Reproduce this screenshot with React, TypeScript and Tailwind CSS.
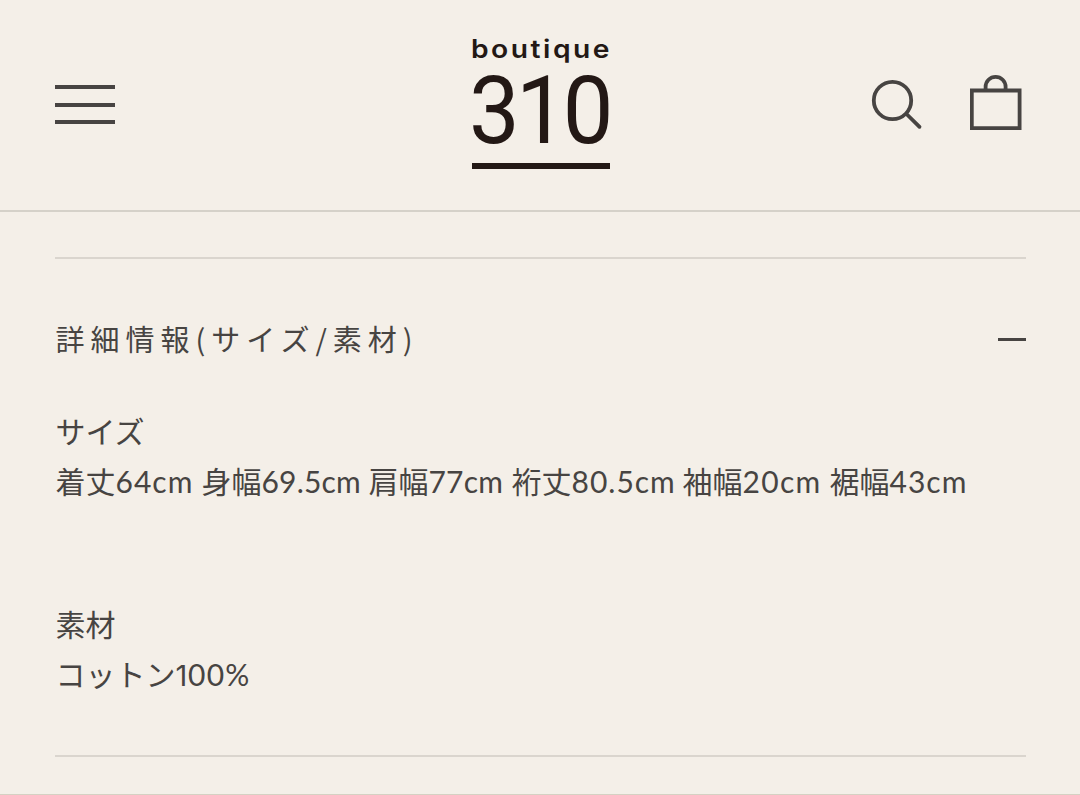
import { FC } from 'react'

interface Measurement {
  label: string
  value: string
  tracking: string
}

const measurements: Measurement[] = [
  { label: '着丈', value: '64cm', tracking: 'tracking-[1px]' },
  { label: '身幅', value: '69.5cm', tracking: 'tracking-[0.2px]' },
  { label: '肩幅', value: '77cm', tracking: 'tracking-[0.2px]' },
  { label: '裄丈', value: '80.5cm', tracking: 'tracking-[1px]' },
  { label: '袖幅', value: '20cm', tracking: 'tracking-[1.3px]' },
  { label: '裾幅', value: '43cm', tracking: 'tracking-[1px]' },
]

const Logo: FC = () => {
  return (
    <a className="flex flex-col items-start w-[138px] text-[#231815]">
      <span className="h-[26px] -ml-px origin-left scale-x-[1.13] font-['Inter',sans-serif] text-[25px] leading-[25px] font-semibold tracking-[2.2px] whitespace-nowrap">
        boutique
      </span>
      <span className="h-[78px] mt-[9px] mb-[13px] -ml-[3px] origin-left scale-x-[0.96] font-['Roboto',sans-serif] text-[94px] leading-[78px] tracking-[-4px] whitespace-nowrap">
        310
      </span>
      <span className="w-[138px] h-[6px] bg-[#231815]" />
    </a>
  )
}

const Header: FC = () => {
  return (
    <header className="grid grid-cols-[1fr_138px_1fr] h-[212px] pl-[55px] pr-[54px] border-b-2 border-[#d5d1c9]">
      <button className="flex flex-col justify-between w-[60px] h-[39px] mt-[85px]">
        <span className="w-full h-[4px] bg-[#474442]" />
        <span className="w-full h-[4px] bg-[#474442]" />
        <span className="w-full h-[4px] bg-[#474442]" />
      </button>
      <div className="mt-[37px]">
        <Logo />
      </div>
      <div className="flex justify-end mt-[72px] gap-[43px]">
        <svg
          width="56"
          height="60"
          viewBox="0 0 56 60"
          fill="none"
          stroke="#474442"
          strokeWidth="3.8"
          strokeLinecap="round"
        >
          <path d="M35.5 42L48.5 54.8" />
          <circle cx="21.5" cy="28.5" r="18.7" />
        </svg>
        <svg
          width="56"
          height="60"
          viewBox="0 0 56 60"
          fill="none"
          stroke="#474442"
          strokeWidth="3.8"
        >
          <path d="M1.8 18.5H49.6V56.2H1.8Z" />
          <path d="M15.6 18.5V14.8A10 10 0 0 1 35.6 14.8V18.5" />
        </svg>
      </div>
    </header>
  )
}

const App: FC = () => {
  return (
    <div className="flex flex-col h-[795px] overflow-hidden bg-[#f4efe8] border-b border-[#d5d1c3] font-['Noto_Sans_CJK_JP',sans-serif] text-[#474442]">
      <Header />
      <main className="h-[500px] ml-[55px] mr-[54px] mt-[45px] border-y-2 border-[#dad5ce]">
        <div className="flex items-center justify-between h-[44px] mt-[58px]">
          <h2 className="pb-[2px] pl-[0.5px] text-[29px] leading-[42px] tracking-[6px] whitespace-nowrap">
            詳細情報(サイズ/素材)
          </h2>
          <span className="w-[28px] h-[3px] bg-[#474442]" />
        </div>
        <div className="mt-[44px] pl-[0.5px] text-[30px] leading-[50px]">
          <p>サイズ</p>
          <p className="grid grid-cols-[146px_167px_143px_171px_147px_1fr] whitespace-nowrap">
            {measurements.map((item) => (
              <span key={item.label}>
                {item.label}
                <span className={`font-['Lato',sans-serif] ${item.tracking}`}>
                  {item.value}
                </span>
              </span>
            ))}
          </p>
          <p className="mt-[92px]">素材</p>
          <p>
            コットン
            <span className="font-['Lato',sans-serif] tracking-[1.2px]">
              <span className="font-['Inter',sans-serif] text-[29px] tracking-[0.8px]">
                1
              </span>
              00%
            </span>
          </p>
        </div>
      </main>
    </div>
  )
}

export default App
